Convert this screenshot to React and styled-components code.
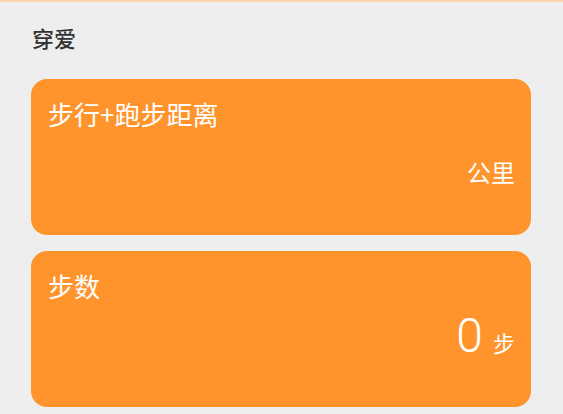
import React from 'react';
import styled, { createGlobalStyle } from 'styled-components';

const GlobalStyle = createGlobalStyle`
  html, body {
    margin: 0;
    padding: 0;
    background: #eeeeee;
  }
  body {
    font-family: "Noto Sans CJK SC", "Noto Sans", sans-serif;
  }
`;

const Page = styled.div`
  border-top: 2px solid #fbd3ad;
  padding: 0 32px 0 31px;
  display: flex;
  flex-direction: column;
`;

const Header = styled.div`
  height: 77px;
  padding-top: 20px;
  padding-left: 1px;
  box-sizing: border-box;
  font-size: 22px;
  font-weight: 500;
  line-height: 30px;
  color: #333333;
`;

const CardList = styled.div`
  display: flex;
  flex-direction: column;
  gap: 16px;
`;

const Card = styled.div`
  height: 156px;
  box-sizing: border-box;
  background: #ff942d;
  border-radius: 16px;
  padding: 18px 16px 0 17px;
  color: #ffffff;
  display: flex;
  flex-direction: column;
`;

const Title = styled.div`
  font-size: 26px;
  line-height: 34px;
`;

const ValueRow = styled.div`
  display: flex;
  justify-content: flex-end;
  align-items: baseline;
  height: 56px;
  margin-top: ${p => (p.$solo ? '13px' : '5px')};
`;

const Number = styled.span`
  font-family: Roboto, "Noto Sans", sans-serif;
  font-weight: 300;
  font-size: 48px;
  line-height: 56px;
`;

const Unit = styled.span`
  font-size: ${p => (p.$small ? '22px' : '24px')};
  line-height: 56px;
  margin-left: ${p => (p.$small ? '10px' : '0')};
`;

const stats = [
  { title: '步行+跑步距离', value: '', unit: '公里' },
  { title: '步数', value: '0', unit: '步' },
];

const App = () => {
  return (
    <>
      <GlobalStyle />
      <Page>
        <Header>穿爱</Header>
        <CardList>
          {stats.map(s => (
            <Card key={s.title}>
              <Title>{s.title}</Title>
              <ValueRow $solo={!s.value}>
                {s.value && <Number>{s.value}</Number>}
                <Unit $small={!!s.value}>{s.unit}</Unit>
              </ValueRow>
            </Card>
          ))}
        </CardList>
      </Page>
    </>
  );
};

export default App;
